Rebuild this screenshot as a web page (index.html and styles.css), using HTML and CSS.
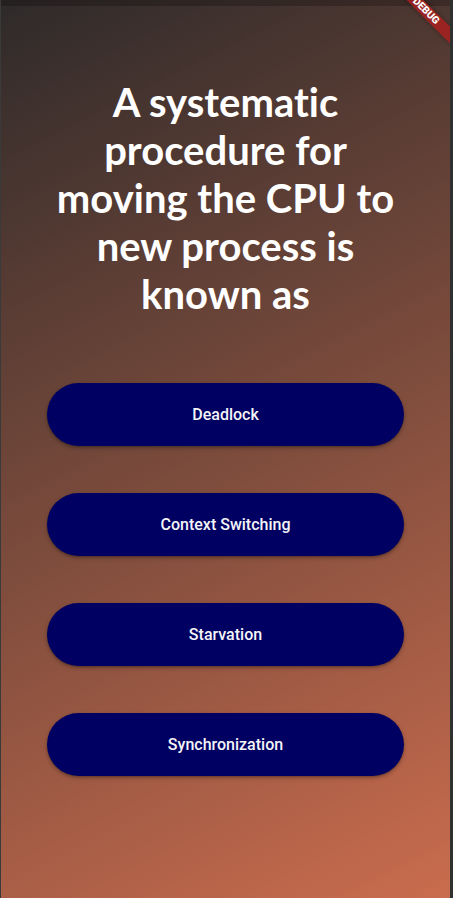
FILE: index.html
```html
<!DOCTYPE html>
<html>
<head>
<meta charset="utf-8">
<link rel="stylesheet" href="styles.css">
</head>
<body>
<div class="screen">
  <main class="app">
    <div class="status-shade"></div>
    <h1 class="question">A systematic procedure for moving the CPU to new process is known as</h1>
    <div class="answers">
      <button class="answer">Deadlock</button>
      <button class="answer">Context Switching</button>
      <button class="answer">Starvation</button>
      <button class="answer">Synchronization</button>
    </div>
    <div class="banner-anchor"><div class="banner">DEBUG</div></div>
  </main>
  <div class="edge"></div>
</div>
</body>
</html>
```
FILE: styles.css
```css
* { box-sizing: border-box; }
html, body { margin: 0; padding: 0; }
body { background: #2f3030; }
.screen {
  display: flex;
  width: 453px;
  height: 898px;
}
.app {
  position: relative;
  overflow: hidden;
  width: 450px;
  height: 898px;
  border-left: 1px solid #3a3a3a;
  background: linear-gradient(153.4deg, #2e2a2a 0%, #7b4b3c 50%, #ca6c4e 100%);
  display: flex;
  flex-direction: column;
  align-items: center;
}
.edge {
  width: 3px;
  height: 898px;
  background: #2f3030;
}
.status-shade {
  position: absolute;
  top: 0;
  left: 0;
  right: 0;
  height: 6px;
  background: rgba(0, 0, 0, 0.22);
}
.question {
  margin: 0;
  width: 360px;
  padding-top: 78px;
  font-family: Lato, "Noto Sans", sans-serif;
  font-weight: 700;
  font-size: 40px;
  line-height: 48px;
  font-variant-ligatures: none;
  color: #ffffff;
  text-align: center;
}
.answers {
  margin-top: 65px;
  display: flex;
  flex-direction: column;
  gap: 47px;
  align-items: center;
}
.answer {
  width: 357px;
  height: 63px;
  border: none;
  border-radius: 32px;
  background: #000062;
  color: #f4f4f8;
  font-family: Roboto, "Noto Sans", sans-serif;
  font-weight: 500;
  font-size: 16px;
  box-shadow: 0 2px 4px rgba(0, 0, 0, 0.25), 0 1px 2px rgba(0, 0, 0, 0.2);
  cursor: pointer;
}
.banner-anchor {
  position: absolute;
  top: -13px;
  right: 0;
  width: 0;
  height: 0;
}
.banner {
  position: absolute;
  left: -40px;
  top: 28px;
  width: 80px;
  height: 12px;
  transform-origin: 40px -28px;
  transform: rotate(45deg);
  background: rgba(183, 28, 28, 0.72);
  box-shadow: 0 0 5px rgba(0, 0, 0, 0.35);
  color: #ffffff;
  font-family: Roboto, "Noto Sans", sans-serif;
  font-weight: 900;
  font-size: 10.2px;
  line-height: 12px;
  text-align: center;
}
```
